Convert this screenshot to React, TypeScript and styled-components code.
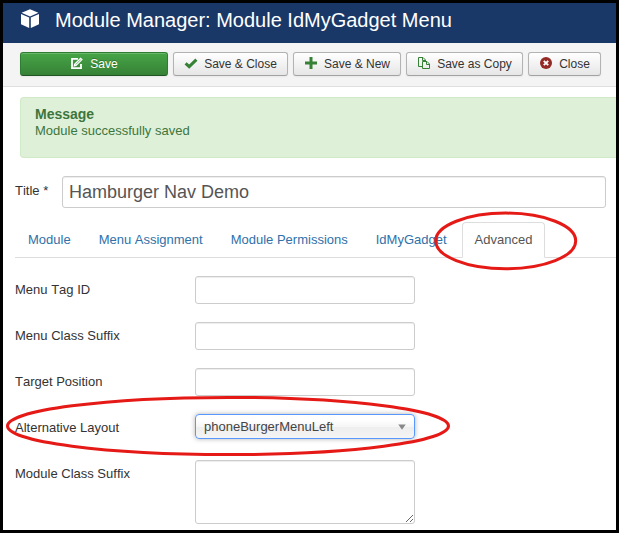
import React from 'react';
import styled, { createGlobalStyle, css } from 'styled-components';

const Global = createGlobalStyle`
  * { box-sizing: border-box; font-kerning: none; }
  html, body { margin: 0; padding: 0; background: #000; }
  body { font: 13px/18px "Liberation Sans", Arial, sans-serif; color: #333; overflow: hidden; }
`;

const Frame = styled.div`
  position: relative;
  width: 619px;
  height: 533px;
  border: 3px solid #000;
  background: #fff;
  overflow: hidden;
`;

const Header = styled.header`
  display: flex;
  align-items: center;
  height: 40px;
  padding-left: 17px;
  gap: 15px;
  background: #1a3867;
  color: #fff;
`;

const PageTitle = styled.h1`
  margin: 0;
  padding-bottom: 6px;
  font-size: 20px;
  line-height: 28px;
  font-weight: 400;
  white-space: nowrap;
`;

const CubeIcon = styled.svg`
  flex: none;
  margin-bottom: 8px;
`;

const Toolbar = styled.div`
  display: flex;
  gap: 5px;
  height: 44px;
  padding: 9px 0 0 17px;
  background: #f4f4f4;
  border-bottom: 1px solid #dfdfdf;
`;

const Button = styled.button<{ $width: number; $primary?: boolean }>`
  display: flex;
  align-items: center;
  justify-content: center;
  width: ${p => p.$width}px;
  height: 24px;
  padding: 0;
  border: 1px solid #b3b3b3;
  border-bottom-color: #a2a2a2;
  border-radius: 3px;
  background: linear-gradient(#fff, #e6e6e6);
  box-shadow: inset 0 1px 0 rgba(255, 255, 255, 0.2), 0 1px 2px rgba(0, 0, 0, 0.05);
  color: #333;
  font: 12px/18px "Liberation Sans", Arial, sans-serif;
  font-kerning: none;
  white-space: nowrap;
  svg { flex: none; margin: -2px 6px 0 0; }
  ${p => p.$primary && css`
    border-color: #2f7d33 #2f7d33 #1f5522;
    background: linear-gradient(#46a546, #378137);
    color: #fff;
    text-shadow: 0 -1px 0 rgba(0, 0, 0, 0.25);
  `}
`;

const Alert = styled.section`
  height: 61px;
  margin: 10px 0 0 17px;
  padding: 7px 14px;
  border: 1px solid #d0e9c6;
  border-right: 0;
  border-radius: 4px 0 0 4px;
  background: #dff0d8;
  color: #3c763d;
`;

const AlertTitle = styled.h2`
  margin: 0;
  font-size: 14px;
  line-height: 18px;
`;

const AlertText = styled.p`
  margin: -1px 0 0;
`;

const TitleRow = styled.div`
  display: flex;
  margin: 18px 0 0 12px;
`;

const TitleLabel = styled.label`
  width: 47px;
  padding-top: 6px;
`;

const fieldStyle = css`
  display: block;
  border: 1px solid #ccc;
  border-radius: 3px;
  background: #fff;
  box-shadow: inset 0 1px 1px rgba(0, 0, 0, 0.075);
  color: #555;
  outline: none;
`;

const TitleInput = styled.input`
  ${fieldStyle}
  width: 544px;
  height: 32px;
  padding: 0 6px;
  font: 18px/24px "Liberation Sans", Arial, sans-serif;
  font-kerning: none;
`;

const Tabs = styled.nav`
  display: flex;
  height: 36px;
  margin: 14px 0 0 12px;
  border-bottom: 1px solid #ddd;
`;

const Tab = styled.a<{ $active?: boolean }>`
  height: 36px;
  margin-right: 2px;
  padding: 8px 12px;
  border: 1px solid transparent;
  border-radius: 4px 4px 0 0;
  color: #3071a9;
  white-space: nowrap;
  ${p => p.$active && css`
    border-color: #ddd #ddd #fff;
    background: #fff;
    color: #555;
  `}
`;

const Form = styled.form`
  display: flex;
  flex-direction: column;
  gap: 18px;
  padding: 18px 0 0 12px;
`;

const Field = styled.div`
  display: flex;
  height: 28px;
`;

const FieldLabel = styled.label`
  width: 180px;
  padding-top: 5px;
`;

const TextInput = styled.input`
  ${fieldStyle}
  width: 220px;
  height: 28px;
`;

const TextArea = styled.textarea`
  ${fieldStyle}
  width: 220px;
  height: 64px;
  margin: 0;
  resize: both;
`;

const Select = styled.div`
  display: flex;
  align-items: center;
  justify-content: space-between;
  width: 220px;
  height: 25px;
  padding: 0 8px;
  border: 1px solid #5897fb;
  border-radius: 4px;
  background: linear-gradient(#fff 20%, #f6f6f6 50%, #eee 52%, #f4f4f4 100%);
  box-shadow: 0 0 5px rgba(0, 0, 0, 0.3);
  color: #444;
`;

const Highlights = styled.svg`
  position: absolute;
  inset: 0;
  pointer-events: none;
`;

const SaveIcon = () => (
  <svg width="14" height="14" viewBox="0 0 14 14" fill="none">
    <path d="M8 2.9H2v9.2h9V8" stroke="#fff" strokeWidth="1.8" />
    <path d="M4 8 10.5 1.4 12.8 3.5 6.3 10 3.5 10.7Z" fill="#fff" />
    <path d="m5.8 8.5 5-5" stroke="#3f963f" strokeWidth=".7" />
  </svg>
);
const CheckIcon = () => (
  <svg width="14" height="14" viewBox="0 0 14 14">
    <path d="m1.6 7.3 3.6 3.4 7.2-7" fill="none" stroke="#378137" strokeWidth="3" />
  </svg>
);
const PlusIcon = () => (
  <svg width="14" height="14" viewBox="0 0 14 14">
    <path d="M5.5 1h3v4.5H13v3H8.5V13h-3V8.5H1v-3h4.5Z" fill="#378137" />
  </svg>
);
const CopyIcon = () => (
  <svg width="14" height="14" viewBox="0 0 14 14" fill="none" stroke="#378137">
    <path d="M5 10.5H1.5v-9H6L8.5 4v1M5.5 1.5v3h3" />
    <path d="M5.5 5.5H10L12.5 8v4.5h-7ZM9.5 5.5v3h3" />
  </svg>
);
const CloseIcon = () => (
  <svg width="14" height="14" viewBox="0 0 14 14">
    <circle cx="7" cy="7" r="6" fill="#942a25" />
    <path d="m4.8 4.8 4.4 4.4m0-4.4L4.8 9.2" stroke="#fff" strokeWidth="1.9" />
  </svg>
);

const tabs = ['Module', 'Menu Assignment', 'Module Permissions', 'IdMyGadget', 'Advanced'];

export default function App() {
  return (
    <>
      <Global />
      <Frame>
        <Header>
          <CubeIcon width="20" height="20" viewBox="0 0 20 20" fill="#fff">
            <path d="M10 .2 18.4 3.8 10 7.6 1.6 3.8Z" />
            <path d="M1 5 9.2 8.6V19L1 15.2Z" />
            <path d="M19 5 10.8 8.6V19l8.2-3.8Z" />
          </CubeIcon>
          <PageTitle>Module Manager: Module IdMyGadget Menu</PageTitle>
        </Header>
        <Toolbar>
          <Button $width={148} $primary><SaveIcon />Save</Button>
          <Button $width={115}><CheckIcon />Save &amp; Close</Button>
          <Button $width={108}><PlusIcon />Save &amp; New</Button>
          <Button $width={117}><CopyIcon />Save as Copy</Button>
          <Button $width={73}><CloseIcon />Close</Button>
        </Toolbar>
        <Alert>
          <AlertTitle>Message</AlertTitle>
          <AlertText>Module successfully saved</AlertText>
        </Alert>
        <TitleRow>
          <TitleLabel htmlFor="title">Title *</TitleLabel>
          <TitleInput id="title" defaultValue="Hamburger Nav Demo" />
        </TitleRow>
        <Tabs>
          {tabs.map(t => <Tab key={t} $active={t === 'Advanced'}>{t}</Tab>)}
        </Tabs>
        <Form>
          {['Menu Tag ID', 'Menu Class Suffix', 'Target Position'].map(l => (
            <Field key={l}><FieldLabel>{l}</FieldLabel><TextInput /></Field>
          ))}
          <Field>
            <FieldLabel>Alternative Layout</FieldLabel>
            <Select>
              phoneBurgerMenuLeft
              <svg width="8" height="6" viewBox="0 0 8 6"><path d="M.3.5h7.4L4 5.8Z" fill="#888" /></svg>
            </Select>
          </Field>
          <Field><FieldLabel>Module Class Suffix</FieldLabel><TextArea /></Field>
        </Form>
        <Highlights width="613" height="527" viewBox="3 3 613 527" fill="none" stroke="#e51a17" strokeWidth="3">
          <ellipse cx="505.7" cy="240.9" rx="70" ry="27.8" />
          <ellipse cx="228" cy="426" rx="220.5" ry="28.6" />
        </Highlights>
      </Frame>
    </>
  );
}
